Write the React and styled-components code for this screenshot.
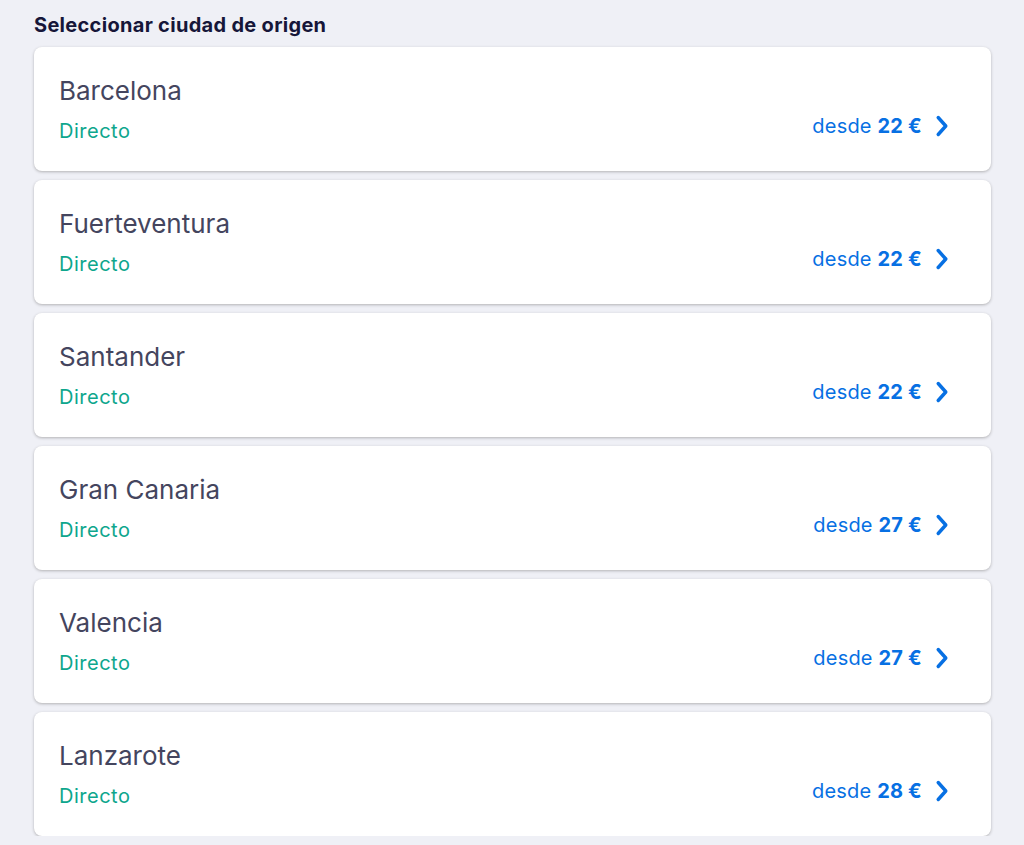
import React from 'react';
import styled, { createGlobalStyle } from 'styled-components';

const GlobalStyle = createGlobalStyle`
  body {
    margin: 0;
    background: #eff0f6;
    font-family: Inter, "Noto Sans", sans-serif;
  }
`;

const origins = [
  { city: 'Barcelona', price: 22 },
  { city: 'Fuerteventura', price: 22 },
  { city: 'Santander', price: 22 },
  { city: 'Gran Canaria', price: 27 },
  { city: 'Valencia', price: 27 },
  { city: 'Lanzarote', price: 28 },
];

const Chevron = () => (
  <svg width="14" height="24" viewBox="0 0 14 24" fill="none">
    <path
      d="M3.2 3.5 L10.8 12 L3.2 20.5"
      stroke="#0770e3"
      strokeWidth="3.4"
      strokeLinecap="round"
      strokeLinejoin="round"
    />
  </svg>
);

const App = () => {
  return (
    <Page>
      <GlobalStyle />
      <Title>Seleccionar ciudad de origen</Title>
      <List>
        {origins.map((o) => (
          <Card key={o.city}>
            <Info>
              <City>{o.city}</City>
              <Direct>Directo</Direct>
            </Info>
            <Price>
              <span>
                desde <strong>{o.price} €</strong>
              </span>
              <Chevron />
            </Price>
          </Card>
        ))}
      </List>
    </Page>
  );
};

const Page = styled.div`
  padding: 13px 33px 0 34px;
  width: 957px;
`;

const Title = styled.h2`
  margin: 0 0 10px;
  font-size: 20px;
  line-height: 24px;
  font-weight: 700;
  letter-spacing: 0.3px;
  color: #161639;
`;

const List = styled.div`
  display: flex;
  flex-direction: column;
  gap: 9px;
`;

const Card = styled.div`
  display: flex;
  justify-content: space-between;
  align-items: center;
  height: 124px;
  box-sizing: border-box;
  padding: 0 42px 0 25px;
  background: #fff;
  border-radius: 8px;
  box-shadow: 0 1px 3px rgba(37, 32, 31, 0.3);
  cursor: pointer;
`;

const Info = styled.div`
  display: flex;
  flex-direction: column;
  gap: 11px;
`;

const City = styled.div`
  font-size: 26px;
  line-height: 32px;
  color: #44455e;
`;

const Direct = styled.div`
  font-size: 20px;
  line-height: 26px;
  letter-spacing: 0.5px;
  color: #0ea68d;
`;

const Price = styled.div`
  display: flex;
  align-items: center;
  gap: 13px;
  margin-top: 34px;
  font-size: 20px;
  letter-spacing: 0.2px;
  color: #0770e3;

  strong {
    font-weight: 700;
  }
`;

export default App;
